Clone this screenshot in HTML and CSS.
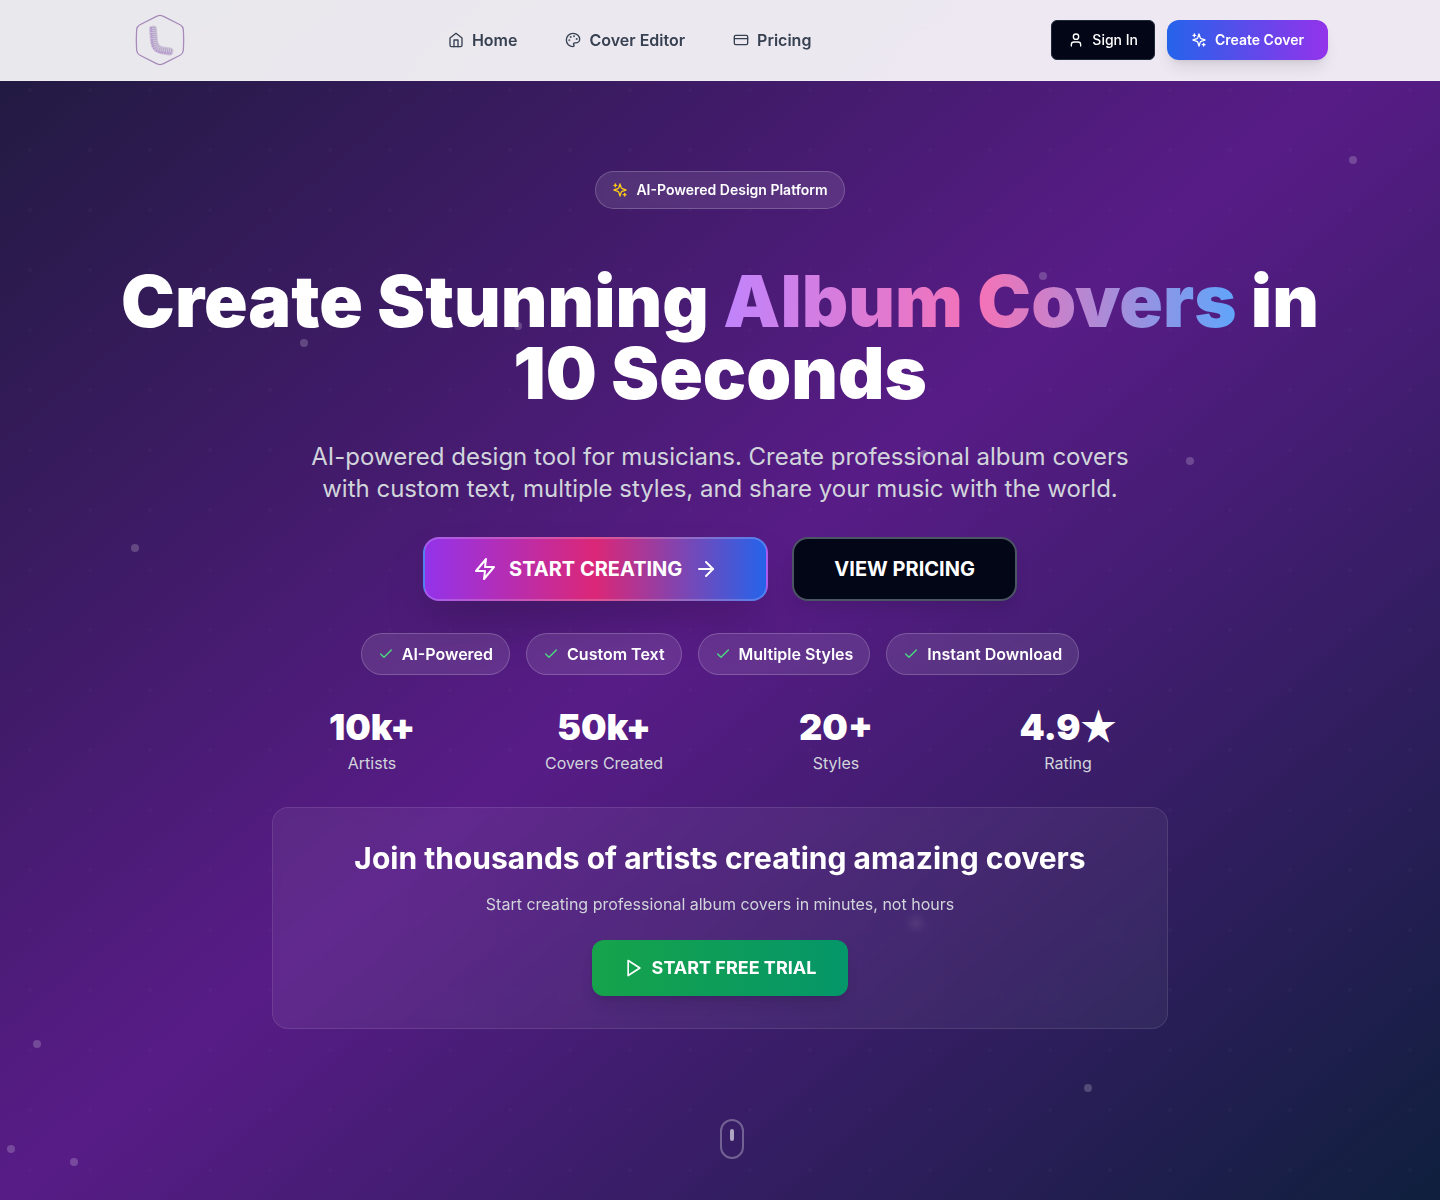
FILE: index.html
```
<!DOCTYPE html>
<html lang="en">
<head>
    <meta charset="UTF-8">
    <meta name="viewport" content="width=device-width, initial-scale=1.0">
    <title>Album Cover Creator</title>
    <link rel="stylesheet" href="styles.css">
</head>
<body>
    <!-- shared icons -->
    <svg class="sprite" aria-hidden="true">
        <symbol id="sparkles" viewBox="0 0 24 24">
            <path d="m12 3-1.912 5.813a2 2 0 0 1-1.275 1.275L3 12l5.813 1.912a2 2 0 0 1 1.275 1.275L12 21l1.912-5.813a2 2 0 0 1 1.275-1.275L21 12l-5.813-1.912a2 2 0 0 1-1.275-1.275L12 3Z"/>
            <path d="M5 3v4M19 17v4M3 5h4M17 19h4"/>
        </symbol>
        <symbol id="check" viewBox="0 0 24 24">
            <path d="M20 6 9 17l-5-5"/>
        </symbol>
    </svg>

    <header class="header">
        <div class="header-inner">
            <a href="#" class="logo" aria-label="Homepage">
                <svg width="50" height="52" viewBox="0 0 50 52" fill="none">
                    <path d="M22 2.200 Q25 .5 28 2.200L45.500 11Q48 12.500 48.300 15.500Q49 26 48.300 36.500Q48 39.500 45.500 41L28 49.800Q25 51.500 22 49.800L4.500 41Q2 39.500 1.700 36.500Q1 26 1.700 15.500Q2 12.500 4.500 11Z" stroke="#a78bba" stroke-width="1.300"/>
                    <path d="M18 15.500L19 27Q20 35.500 28 36.500L34.500 37.500" stroke="#cfc3d9" stroke-width="8" stroke-linecap="round" stroke-linejoin="round"/>
                    <path d="M18 13L19 27Q20 35.500 28 36.500L37 38" stroke="#b3a8c8" stroke-width="6" stroke-dasharray="1 1"/>
                    <path d="M16 13L17 28Q18 38 28 38.500L36 39.500" stroke="#b99ad0" stroke-width="2" stroke-dasharray="2 1"/>
                </svg>
            </a>
            <nav class="nav">
                <a href="#">
                    <svg class="icon" viewBox="0 0 24 24"><path d="m3 9 9-7 9 7v11a2 2 0 0 1-2 2H5a2 2 0 0 1-2-2z"/><path d="M9 22V12h6v10"/></svg>
                    Home
                </a>
                <a href="#">
                    <svg class="icon" viewBox="0 0 24 24"><circle cx="13.500" cy="6.500" r=".5"/><circle cx="17.500" cy="10.500" r=".5"/><circle cx="8.500" cy="7.500" r=".5"/><circle cx="6.500" cy="12.500" r=".5"/><path d="M12 2C6.500 2 2 6.500 2 12s4.500 10 10 10c.926 0 1.648-.746 1.648-1.688 0-.437-.18-.835-.437-1.125-.29-.289-.438-.652-.438-1.125a1.640 1.640 0 0 1 1.668-1.668h1.996c3.051 0 5.555-2.503 5.555-5.554C21.965 6.012 17.461 2 12 2z"/></svg>
                    Cover Editor
                </a>
                <a href="#">
                    <svg class="icon" viewBox="0 0 24 24"><rect x="2" y="5" width="20" height="14" rx="2"/><path d="M2 10h20"/></svg>
                    Pricing
                </a>
            </nav>
            <div class="actions">
                <button type="button" class="btn btn-signin">
                    <svg class="icon" viewBox="0 0 24 24"><path d="M19 21v-2a4 4 0 0 0-4-4H9a4 4 0 0 0-4 4v2"/><circle cx="12" cy="7" r="4"/></svg>
                    Sign In
                </button>
                <button type="button" class="btn btn-cover">
                    <svg class="icon"><use href="#sparkles"/></svg>
                    Create Cover
                </button>
            </div>
        </div>
    </header>

    <main class="hero">
        <!-- floating particles -->
        <div class="particles" aria-hidden="true">
            <span class="particle p1"></span>
            <span class="particle p2"></span>
            <span class="particle p3"></span>
            <span class="particle p4"></span>
            <span class="particle p5"></span>
            <span class="particle p6"></span>
            <span class="particle p7"></span>
            <span class="particle p8"></span>
            <span class="particle p9"></span>
            <span class="particle p10"></span>
            <span class="particle p11"></span>
            <span class="particle p12"></span>
        </div>

        <div class="hero-content">
            <div class="badge">
                <svg class="icon"><use href="#sparkles"/></svg>
                AI-Powered Design Platform
            </div>

            <h1>Create Stunning <span class="gradient-text">Album Covers</span> in 10 Seconds</h1>

            <p class="lead">AI-powered design tool for musicians. Create professional album covers with custom text, multiple styles, and share your music with the world.</p>

            <div class="cta">
                <button type="button" class="btn btn-start">
                    <svg class="icon" viewBox="0 0 24 24"><path d="M13 2 3 14h9l-1 8 10-12h-9l1-8z"/></svg>
                    START CREATING
                    <svg class="icon" viewBox="0 0 24 24"><path d="M5 12h14"/><path d="m12 5 7 7-7 7"/></svg>
                </button>
                <button type="button" class="btn btn-pricing">VIEW PRICING</button>
            </div>

            <ul class="features">
                <li><svg class="icon"><use href="#check"/></svg>AI-Powered</li>
                <li><svg class="icon"><use href="#check"/></svg>Custom Text</li>
                <li><svg class="icon"><use href="#check"/></svg>Multiple Styles</li>
                <li><svg class="icon"><use href="#check"/></svg>Instant Download</li>
            </ul>

            <div class="stats">
                <div>
                    <div class="stat-value">10k+</div>
                    <div class="stat-label">Artists</div>
                </div>
                <div>
                    <div class="stat-value">50k+</div>
                    <div class="stat-label">Covers Created</div>
                </div>
                <div>
                    <div class="stat-value">20+</div>
                    <div class="stat-label">Styles</div>
                </div>
                <div>
                    <div class="stat-value">4.9<span class="star">★</span></div>
                    <div class="stat-label">Rating</div>
                </div>
            </div>

            <section class="card">
                <h2>Join thousands of artists creating amazing covers</h2>
                <p>Start creating professional album covers in minutes, not hours</p>
                <button type="button" class="btn btn-trial">
                    <svg class="icon" viewBox="0 0 24 24"><path d="m5 3 14 9-14 9V3z"/></svg>
                    START FREE TRIAL
                </button>
            </section>
        </div>

        <div class="scroll-hint" aria-hidden="true"><span></span></div>
    </main>
</body>
</html>
```
FILE: styles.css
```
* {
  box-sizing: border-box;
  margin: 0;
  padding: 0;
}

body {
  font-family: Inter, "Liberation Sans", sans-serif;
  font-size: 16px;
  line-height: 24px;
  color: #fff;
  background: #0f172a;
}

a {
  color: inherit;
  text-decoration: none;
}

.sprite {
  position: absolute;
  width: 0;
  height: 0;
}

.icon {
  width: 16px;
  height: 16px;
  flex-shrink: 0;
  fill: none;
  stroke: currentColor;
  stroke-width: 2;
  stroke-linecap: round;
  stroke-linejoin: round;
}

/* header */
.header {
  position: fixed;
  top: 0;
  left: 0;
  right: 0;
  z-index: 10;
  background: rgba(255, 255, 255, 0.9);
  border-bottom: 1px solid rgba(255, 255, 255, 0.2);
  backdrop-filter: blur(12px);
}

.header-inner {
  max-width: 1280px;
  height: 80px;
  margin: 0 auto;
  padding: 0 32px;
  display: flex;
  align-items: center;
  justify-content: space-between;
}

.logo {
  display: flex;
  justify-content: center;
  width: 96px;
}

.nav {
  display: flex;
  gap: 48px;
  font-weight: 600;
  color: #374151;
}

.nav a {
  display: flex;
  align-items: center;
  gap: 8px;
}

.actions {
  display: flex;
  gap: 12px;
}

/* buttons */
.btn {
  display: inline-flex;
  align-items: center;
  justify-content: center;
  gap: 8px;
  border: none;
  font-family: inherit;
  font-size: 14px;
  font-weight: 500;
  line-height: 20px;
  color: #fff;
  white-space: nowrap;
  cursor: pointer;
}

.btn-signin {
  height: 40px;
  padding: 0 16px;
  border: 1px solid #1e293b;
  border-radius: 6px;
  background: #020617;
}

.btn-cover {
  height: 40px;
  padding: 0 24px;
  border-radius: 12px;
  font-weight: 600;
  background: linear-gradient(to right, #2563eb, #9333ea);
  box-shadow: 0 10px 15px -3px rgba(0, 0, 0, 0.1), 0 4px 6px -4px rgba(0, 0, 0, 0.1);
}

.btn-start,
.btn-pricing {
  height: 64px;
  border-radius: 16px;
  font-size: 20px;
  font-weight: 700;
  line-height: 28px;
}

.btn-start {
  gap: 12px;
  padding: 0 48px;
  border: 2px solid rgba(255, 255, 255, 0.2);
  background: linear-gradient(to right, #9333ea, #db2777, #2563eb);
  box-shadow: 0 25px 50px -12px rgba(0, 0, 0, 0.25);
}

.btn-start .icon {
  width: 24px;
  height: 24px;
}

.btn-pricing {
  padding: 0 40px;
  border: 2px solid #4b5563;
  background: #020617;
  box-shadow: 0 10px 15px -3px rgba(0, 0, 0, 0.1);
}

.btn-trial {
  height: 56px;
  padding: 0 32px;
  border-radius: 12px;
  font-size: 18px;
  line-height: 28px;
  font-weight: 700;
  background: linear-gradient(to right, #16a34a, #059669);
  box-shadow: 0 10px 15px -3px rgba(0, 0, 0, 0.1), 0 4px 6px -4px rgba(0, 0, 0, 0.1);
}

.btn-trial .icon {
  width: 20px;
  height: 20px;
}

/* hero */
.hero {
  position: relative;
  min-height: 100vh;
  display: flex;
  align-items: center;
  justify-content: center;
  overflow: hidden;
  background:
    radial-gradient(circle at 30px 30px, rgba(156, 146, 172, 0.04) 2px, transparent 2px) 0 0 / 60px 60px,
    linear-gradient(to bottom right, #1e1a3d, #581c87, #0f1f3d);
}

.particle {
  position: absolute;
  width: 8px;
  height: 8px;
  border-radius: 50%;
  background: rgba(255, 255, 255, 0.2);
}

.p1 { left: 1349px; top: 156px; }
.p2 { left: 1039px; top: 272px; }
.p3 { left: 514px; top: 322px; }
.p4 { left: 300px; top: 339px; }
.p5 { left: 1186px; top: 457px; }
.p6 { left: 920px; top: 450px; }
.p7 { left: 131px; top: 544px; }
.p8 { left: 912px; top: 919px; }
.p9 { left: 33px; top: 1040px; }
.p10 { left: 1084px; top: 1084px; }
.p11 { left: 7px; top: 1145px; }
.p12 { left: 70px; top: 1158px; }

.hero-content {
  position: relative;
  width: 100%;
  max-width: 1280px;
  padding: 0 32px;
  display: flex;
  flex-direction: column;
  align-items: center;
  gap: 32px;
  text-align: center;
}

.badge {
  display: flex;
  align-items: center;
  gap: 8px;
  margin-bottom: 24px;
  padding: 8px 16px;
  border: 1px solid rgba(255, 255, 255, 0.2);
  border-radius: 999px;
  background: rgba(255, 255, 255, 0.1);
  backdrop-filter: blur(4px);
  font-size: 14px;
  line-height: 20px;
  font-weight: 600;
}

.badge .icon {
  color: #facc15;
}

h1 {
  font-size: 72px;
  line-height: 72px;
  font-weight: 900;
}

.gradient-text {
  color: transparent;
  background: linear-gradient(to right, #c084fc, #f472b6, #60a5fa);
  -webkit-background-clip: text;
  background-clip: text;
}

.lead {
  max-width: 848px;
  font-size: 24px;
  line-height: 32px;
  color: #d1d5db;
}

.cta {
  display: flex;
  flex-wrap: wrap;
  justify-content: center;
  gap: 24px;
}

.features {
  display: flex;
  flex-wrap: wrap;
  justify-content: center;
  gap: 16px;
  list-style: none;
}

.features li {
  display: flex;
  align-items: center;
  gap: 8px;
  padding: 8px 16px;
  border: 1px solid rgba(255, 255, 255, 0.2);
  border-radius: 999px;
  background: rgba(255, 255, 255, 0.1);
  backdrop-filter: blur(4px);
  font-weight: 600;
}

.features .icon {
  color: #4ade80;
}

.stats {
  width: 100%;
  max-width: 896px;
  display: grid;
  grid-template-columns: repeat(4, 1fr);
  gap: 32px;
}

.stat-value {
  margin-bottom: 4px;
  font-size: 36px;
  line-height: 40px;
  font-weight: 900;
}

.star {
  font-family: "Noto Sans CJK JP", sans-serif;
  line-height: 0;
}

.stat-label {
  color: #d1d5db;
}

.card {
  width: 100%;
  max-width: 896px;
  padding: 32px;
  border: 1px solid rgba(255, 255, 255, 0.1);
  border-radius: 16px;
  background: linear-gradient(to right, rgba(255, 255, 255, 0.06), rgba(255, 255, 255, 0.05));
  backdrop-filter: blur(4px);
}

.card h2 {
  margin-bottom: 16px;
  font-size: 30px;
  line-height: 36px;
  font-weight: 700;
}

.card p {
  margin-bottom: 24px;
  color: #d1d5db;
}

.scroll-hint {
  position: absolute;
  left: 50%;
  bottom: 41px;
  width: 24px;
  height: 40px;
  padding-top: 8px;
  display: flex;
  justify-content: center;
  border: 2px solid rgba(255, 255, 255, 0.3);
  border-radius: 12px;
}

.scroll-hint span {
  width: 4px;
  height: 12px;
  border-radius: 2px;
  background: rgba(255, 255, 255, 0.6);
}
```
